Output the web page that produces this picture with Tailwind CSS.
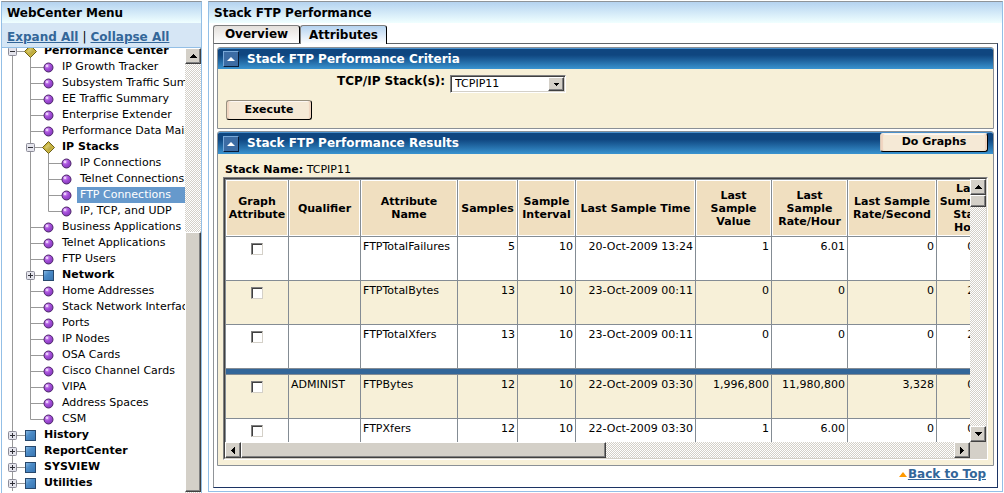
<!DOCTYPE html>
<html lang="en">
<head>
<meta charset="utf-8">
<title>Stack FTP Performance</title>
<script src="https://cdn.jsdelivr.net/npm/@tailwindcss/browser@4"></script>
</head>
<body class="flex h-screen gap-[6px] overflow-hidden bg-white pt-px pl-px pr-px font-['DejaVu_Sans',Verdana,sans-serif] text-[11px] leading-[13px] text-black">

<!-- Tree gutter symbols: connector lines plus node icon for each kind of row -->
<svg class="absolute h-0 w-0" aria-hidden="true">
  <defs>
    <radialGradient id="ballFill" cx="0.35" cy="0.3" r="0.75"><stop offset="0" stop-color="#e0b8f8"/><stop offset="0.45" stop-color="#a850dc"/><stop offset="1" stop-color="#8038b8"/></radialGradient>
    <linearGradient id="blueFill" x1="0" y1="0" x2="1" y2="1"><stop offset="0" stop-color="#8cbce4"/><stop offset="0.4" stop-color="#4c8cc8"/><stop offset="1" stop-color="#3874b0"/></linearGradient>
    <linearGradient id="goldFill" x1="0" y1="0" x2="1" y2="1"><stop offset="0" stop-color="#f0e490"/><stop offset="1" stop-color="#a08c20"/></linearGradient>
    <g id="ball"><circle cx="0.5" cy="0.5" r="4.5" fill="url(#ballFill)" stroke="#4c2468"/><circle cx="-1" cy="-1" r="1" fill="#f4dcff"/></g>
    <g id="square"><rect x="-4.5" y="-4.5" width="10" height="10" fill="url(#blueFill)" stroke="#28486c"/></g>
    <g id="diamond"><path d="M.5-5.5 6.5.5.5 6.5-5.5.5Z" fill="#c8b440" stroke="#6c601c"/><path d="M.5-3 4 .5.5 4-3 .5Z" fill="url(#goldFill)"/></g>
    <g id="box"><rect x="-3.5" y="-3.5" width="8" height="8" rx="1" fill="#e4e4ec" stroke="#8c8c98"/><path d="M-2 .5H3" stroke="#303038"/></g>
    <g id="plus"><use href="#box"/><path d="M.5-2V3" stroke="#303038"/></g>
  </defs>
  <symbol id="l1-open" viewBox="2 0 39 16"><path d="M12.5 8V16M12.5 8.5H30M30.5 8V16" stroke="#999" fill="none"/><use href="#box" x="12" y="8"/><use href="#diamond" x="30" y="8"/></symbol>
  <symbol id="l1-closed" viewBox="2 0 39 16"><path d="M12.5 0V16M12.5 8.5H30" stroke="#999" fill="none"/><use href="#plus" x="12" y="8"/><use href="#square" x="30" y="8"/></symbol>
  <symbol id="l2-leaf" viewBox="2 0 57 16"><path d="M12.5 0V16M30.5 0V16M30.5 8.5H48" stroke="#999" fill="none"/><use href="#ball" x="48" y="8"/></symbol>
  <symbol id="l2-last" viewBox="2 0 57 16"><path d="M12.5 0V16M30.5 0V8.5H48" stroke="#999" fill="none"/><use href="#ball" x="48" y="8"/></symbol>
  <symbol id="l2-open" viewBox="2 0 57 16"><path d="M12.5 0V16M30.5 0V16M30.5 8.5H48M48.5 8V16" stroke="#999" fill="none"/><use href="#box" x="30" y="8"/><use href="#diamond" x="48" y="8"/></symbol>
  <symbol id="l2-closed" viewBox="2 0 57 16"><path d="M12.5 0V16M30.5 0V16M30.5 8.5H48" stroke="#999" fill="none"/><use href="#plus" x="30" y="8"/><use href="#square" x="48" y="8"/></symbol>
  <symbol id="l3-leaf" viewBox="2 0 75 16"><path d="M12.5 0V16M30.5 0V16M48.5 0V16M48.5 8.5H66" stroke="#999" fill="none"/><use href="#ball" x="66" y="8"/></symbol>
  <symbol id="l3-last" viewBox="2 0 75 16"><path d="M12.5 0V16M30.5 0V16M48.5 0V8.5H66" stroke="#999" fill="none"/><use href="#ball" x="66" y="8"/></symbol>
</svg>

<nav class="flex w-[201px] shrink-0 flex-col border-x border-t border-x-[#93bfe6] border-t-[#8f9499]">
  <h2 class="flex h-[21px] shrink-0 items-center bg-linear-to-b from-[#b5d3f0] to-[#f0ffff] pt-[2px] pl-[5px] text-[12px] font-bold">WebCenter Menu</h2>
  <div class="flex h-[25px] shrink-0 items-center gap-[4px] border-b border-[#93bfe6] bg-[#d6e6f5] pt-[4px] pl-[5px] text-[12px]">
    <a href="#" class="font-bold text-[#336699] underline">Expand All</a><span>|</span><a href="#" class="font-bold text-[#336699] underline">Collapse All</a>
  </div>
  <div class="flex min-h-0 flex-1">
    <ul class="-mt-[5px] min-w-0 flex-1 overflow-hidden whitespace-nowrap leading-4 [clip-path:inset(5px_0_0_0)]">
      <li class="flex h-4"><svg class="h-4 w-[39px] shrink-0"><use href="#l1-open"/></svg><a href="#" class="px-[3px] font-bold">Performance Center</a></li>
      <li class="flex h-4"><svg class="h-4 w-[57px] shrink-0"><use href="#l2-leaf"/></svg><a href="#" class="px-[3px]">IP Growth Tracker</a></li>
      <li class="flex h-4"><svg class="h-4 w-[57px] shrink-0"><use href="#l2-leaf"/></svg><a href="#" class="px-[3px]">Subsystem Traffic Summary</a></li>
      <li class="flex h-4"><svg class="h-4 w-[57px] shrink-0"><use href="#l2-leaf"/></svg><a href="#" class="px-[3px]">EE Traffic Summary</a></li>
      <li class="flex h-4"><svg class="h-4 w-[57px] shrink-0"><use href="#l2-leaf"/></svg><a href="#" class="px-[3px]">Enterprise Extender</a></li>
      <li class="flex h-4"><svg class="h-4 w-[57px] shrink-0"><use href="#l2-leaf"/></svg><a href="#" class="px-[3px]">Performance Data Maintenance</a></li>
      <li class="flex h-4"><svg class="h-4 w-[57px] shrink-0"><use href="#l2-open"/></svg><a href="#" class="px-[3px] font-bold">IP Stacks</a></li>
      <li class="flex h-4"><svg class="h-4 w-[75px] shrink-0"><use href="#l3-leaf"/></svg><a href="#" class="px-[3px]">IP Connections</a></li>
      <li class="flex h-4"><svg class="h-4 w-[75px] shrink-0"><use href="#l3-leaf"/></svg><a href="#" class="px-[3px]">Telnet Connections</a></li>
      <li class="flex h-4"><svg class="h-4 w-[75px] shrink-0"><use href="#l3-leaf"/></svg><a href="#" class="flex-1 bg-[#6699cc] px-[3px] text-white">FTP Connections</a></li>
      <li class="flex h-4"><svg class="h-4 w-[75px] shrink-0"><use href="#l3-last"/></svg><a href="#" class="px-[3px]">IP, TCP, and UDP</a></li>
      <li class="flex h-4"><svg class="h-4 w-[57px] shrink-0"><use href="#l2-leaf"/></svg><a href="#" class="px-[3px]">Business Applications</a></li>
      <li class="flex h-4"><svg class="h-4 w-[57px] shrink-0"><use href="#l2-leaf"/></svg><a href="#" class="px-[3px]">Telnet Applications</a></li>
      <li class="flex h-4"><svg class="h-4 w-[57px] shrink-0"><use href="#l2-leaf"/></svg><a href="#" class="px-[3px]">FTP Users</a></li>
      <li class="flex h-4"><svg class="h-4 w-[57px] shrink-0"><use href="#l2-closed"/></svg><a href="#" class="px-[3px] font-bold">Network</a></li>
      <li class="flex h-4"><svg class="h-4 w-[57px] shrink-0"><use href="#l2-leaf"/></svg><a href="#" class="px-[3px]">Home Addresses</a></li>
      <li class="flex h-4"><svg class="h-4 w-[57px] shrink-0"><use href="#l2-leaf"/></svg><a href="#" class="px-[3px]">Stack Network Interfaces</a></li>
      <li class="flex h-4"><svg class="h-4 w-[57px] shrink-0"><use href="#l2-leaf"/></svg><a href="#" class="px-[3px]">Ports</a></li>
      <li class="flex h-4"><svg class="h-4 w-[57px] shrink-0"><use href="#l2-leaf"/></svg><a href="#" class="px-[3px]">IP Nodes</a></li>
      <li class="flex h-4"><svg class="h-4 w-[57px] shrink-0"><use href="#l2-leaf"/></svg><a href="#" class="px-[3px]">OSA Cards</a></li>
      <li class="flex h-4"><svg class="h-4 w-[57px] shrink-0"><use href="#l2-leaf"/></svg><a href="#" class="px-[3px]">Cisco Channel Cards</a></li>
      <li class="flex h-4"><svg class="h-4 w-[57px] shrink-0"><use href="#l2-leaf"/></svg><a href="#" class="px-[3px]">VIPA</a></li>
      <li class="flex h-4"><svg class="h-4 w-[57px] shrink-0"><use href="#l2-leaf"/></svg><a href="#" class="px-[3px]">Address Spaces</a></li>
      <li class="flex h-4"><svg class="h-4 w-[57px] shrink-0"><use href="#l2-last"/></svg><a href="#" class="px-[3px]">CSM</a></li>
      <li class="flex h-4"><svg class="h-4 w-[39px] shrink-0"><use href="#l1-closed"/></svg><a href="#" class="px-[3px] font-bold">History</a></li>
      <li class="flex h-4"><svg class="h-4 w-[39px] shrink-0"><use href="#l1-closed"/></svg><a href="#" class="px-[3px] font-bold">ReportCenter</a></li>
      <li class="flex h-4"><svg class="h-4 w-[39px] shrink-0"><use href="#l1-closed"/></svg><a href="#" class="px-[3px] font-bold">SYSVIEW</a></li>
      <li class="flex h-4"><svg class="h-4 w-[39px] shrink-0"><use href="#l1-closed"/></svg><a href="#" class="px-[3px] font-bold">Utilities</a></li>
    </ul>
    <div class="flex w-4 shrink-0 flex-col bg-[repeating-conic-gradient(#fff_0_25%,#d4d0c8_0_50%)] bg-[length:2px_2px]">
      <button aria-label="Scroll up" class="flex h-4 w-4 shrink-0 items-center justify-center border border-t-white border-r-[#404040] border-b-[#404040] border-l-white bg-[#d4d0c8] shadow-[inset_-1px_-1px_0_#808080]"><svg class="h-1 w-[7px]" viewBox="0 0 7 4" shape-rendering="crispEdges"><path d="M3 0h1v1h1v1h1v1h1v1H0V3h1V2h1V1h1z"/></svg></button>
      <div class="mt-[168px] h-[260px] border border-t-white border-r-[#404040] border-b-[#404040] border-l-white bg-[#d4d0c8] shadow-[inset_-1px_-1px_0_#808080]"></div>
    </div>
  </div>
</nav>

<main class="mb-px flex min-w-0 flex-1 flex-col border border-t-[#8f9499] border-r-[#93bfe6] border-b-[#93bfe6] border-l-[#93bfe6] pb-[3px]">
  <h1 class="flex h-[21px] shrink-0 items-center bg-linear-to-b from-[#b5d3f0] to-[#f0ffff] pt-[2px] pl-[5px] text-[12px] font-bold">Stack FTP Performance</h1>

  <div class="ml-1 flex h-[20px] shrink-0 items-end" role="tablist">
    <button role="tab" class="h-[18px] w-[87px] rounded-t-[3px] border border-b-0 border-t-[#808080] border-r-black border-l-[#808080] bg-linear-to-b from-[#e4e0dc] to-white text-[12px] font-bold">Overview</button>
    <button role="tab" aria-selected="true" class="relative z-10 -mb-px h-[19px] w-[87px] rounded-t-[3px] border border-b-0 border-t-[#808080] border-r-black border-l-[#808080] bg-linear-to-b from-[#b5d3f0] to-white text-[12px] font-bold">Attributes</button>
  </div>

  <div class="mr-1 ml-1 flex flex-1 flex-col gap-[2px] border border-t-[#606468] border-r-[#1c3464] border-b-[#1c3464] border-l-[#909498] px-[3px] pt-[3px]">
    <section class="shrink-0 rounded-t-[3px] border border-[#8a9096] bg-[#f7f0d8]">
      <div class="flex h-[21px] items-center gap-2 rounded-t-[2px] border-t border-[#4a90cc] bg-linear-to-b from-[#0f4680] from-30% to-[#3a94d0] pl-[5px]">
        <button aria-label="Collapse criteria" class="flex h-4 w-4 items-center justify-center border border-t-[#78a8d8] border-r-[#081c38] border-b-[#081c38] border-l-[#78a8d8] bg-[#3c6ca4]"><svg class="h-1 w-2" viewBox="0 0 8 4"><path d="M4 0 8 4H0Z" fill="#fff"/></svg></button>
        <h2 class="text-[12px] font-bold text-white">Stack FTP Performance Criteria</h2>
      </div>
      <form class="h-[59px] pl-2">
        <div class="flex justify-start pt-[6px] pl-[111px]">
          <label for="stack" class="w-[113px] text-[12px] font-bold whitespace-nowrap">TCP/IP Stack(s):</label>
          <div class="relative h-[18px] w-[116px]">
            <select id="stack" class="block h-full w-full appearance-none rounded-none border border-t-[#808080] border-r-white border-b-white border-l-[#808080] bg-white pl-1 text-[11px] leading-[14px] shadow-[inset_1px_1px_0_#404040,inset_-1px_-1px_0_#d4d0c8]"><option>TCPIP11</option></select>
            <span class="pointer-events-none absolute top-[2px] right-[2px] flex h-[14px] w-4 items-center justify-center border border-t-white border-r-[#404040] border-b-[#404040] border-l-white bg-[#d4d0c8] shadow-[inset_-1px_-1px_0_#808080]"><svg class="h-[3px] w-[5px]" viewBox="0 0 5 3" shape-rendering="crispEdges"><path d="M0 0h5v1H4v1H3v1H2V2H1V1H0z"/></svg></span>
          </div>
        </div>
        <button type="button" class="mt-[7px] block h-5 w-[86px] rounded-[3px] border border-t-[#989080] border-r-black border-b-black border-l-[#989080] bg-[#f5e9d6] pb-[2px] font-bold shadow-[inset_2px_0_1px_#f0d4c0,inset_-2px_0_1px_#f0d4c0,inset_0_1px_0_#fff]">Execute</button>
      </form>
    </section>

    <section class="shrink-0 rounded-t-[3px] border border-[#8a9096] bg-[#f7f0d8]">
      <div class="flex h-[22px] items-center gap-2 rounded-t-[2px] border-t border-[#4a90cc] bg-linear-to-b from-[#0f4680] from-30% to-[#3a94d0] pr-[5px] pl-[5px]">
        <button aria-label="Collapse results" class="flex h-4 w-4 items-center justify-center border border-t-[#78a8d8] border-r-[#081c38] border-b-[#081c38] border-l-[#78a8d8] bg-[#3c6ca4]"><svg class="h-1 w-2" viewBox="0 0 8 4"><path d="M4 0 8 4H0Z" fill="#fff"/></svg></button>
        <h2 class="text-[12px] font-bold text-white">Stack FTP Performance Results</h2>
        <button class="ml-auto h-[19px] w-[108px] self-start rounded-[3px] border border-t-[#f8f0e4] border-r-black border-b-black border-l-[#d8c8b8] bg-[#f5e9d6] pb-[2px] font-bold shadow-[inset_2px_0_1px_#f0d4c0,inset_-2px_0_1px_#f0d4c0,inset_0_1px_0_#fff]">Do Graphs</button>
      </div>
      <p class="pt-[9px] pb-[1px] pl-[7px]"><b>Stack Name:</b> TCPIP11</p>

      <div class="mr-[5px] mb-[5px] ml-[5px] border border-t-[#808080] border-r-white border-b-white border-l-[#808080]">
        <div class="border border-t-[#404040] border-r-[#d4d0c8] border-b-[#d4d0c8] border-l-[#404040]">
          <div class="flex h-[263px]">
            <div class="min-w-0 flex-1 overflow-hidden">
              <table class="w-[777px] table-fixed border-separate border-spacing-0 border-t border-l border-[#848c94] bg-white [&_td]:border-r [&_td]:border-b [&_td]:border-[#848c94] [&_td]:px-[2px] [&_td]:pt-[3px] [&_td]:align-top [&_th]:border-r [&_th]:border-b [&_th]:border-[#848c94] [&_th]:bg-[#f0dfc0] [&_th]:shadow-[inset_0_0_0_1px_#fff]">
                <colgroup><col class="w-[63px]"><col class="w-[72px]"><col class="w-[97px]"><col class="w-[60px]"><col class="w-[58px]"><col class="w-[120px]"><col class="w-[76px]"><col class="w-[76px]"><col class="w-[89px]"><col class="w-[65px]"></colgroup>
                <thead>
                  <tr class="h-[57px]"><th>Graph<br>Attribute</th><th>Qualifier</th><th>Attribute<br>Name</th><th>Samples</th><th>Sample<br>Interval</th><th class="whitespace-nowrap">Last Sample Time</th><th>Last<br>Sample<br>Value</th><th>Last<br>Sample<br>Rate/Hour</th><th class="whitespace-nowrap">Last Sample<br>Rate/Second</th><th>Last<br>Summary<br>Start<br>Hour</th></tr>
                </thead>
                <tbody class="text-right">
                  <tr class="h-[44px]"><td class="text-center"><input type="checkbox" aria-label="Graph FTPTotalFailures" class="mt-[3px] h-3 w-3 appearance-none border border-t-[#808080] border-r-[#d4d0c8] border-b-[#d4d0c8] border-l-[#808080] bg-white shadow-[inset_1px_1px_0_#404040]"></td><td></td><td class="text-left">FTPTotalFailures</td><td>5</td><td>10</td><td>20-Oct-2009 13:24</td><td>1</td><td>6.01</td><td>0</td><td>01:00</td></tr>
                  <tr class="h-[44px] bg-[#f7f0d8]"><td class="text-center"><input type="checkbox" aria-label="Graph FTPTotalBytes" class="mt-[3px] h-3 w-3 appearance-none border border-t-[#808080] border-r-[#d4d0c8] border-b-[#d4d0c8] border-l-[#808080] bg-white shadow-[inset_1px_1px_0_#404040]"></td><td></td><td class="text-left">FTPTotalBytes</td><td>13</td><td>10</td><td>23-Oct-2009 00:11</td><td>0</td><td>0</td><td>0</td><td>23:00</td></tr>
                  <tr class="h-[44px]"><td class="text-center"><input type="checkbox" aria-label="Graph FTPTotalXfers" class="mt-[3px] h-3 w-3 appearance-none border border-t-[#808080] border-r-[#d4d0c8] border-b-[#d4d0c8] border-l-[#808080] bg-white shadow-[inset_1px_1px_0_#404040]"></td><td></td><td class="text-left">FTPTotalXfers</td><td>13</td><td>10</td><td>23-Oct-2009 00:11</td><td>0</td><td>0</td><td>0</td><td>23:00</td></tr>
                  <tr class="h-[6px] bg-[#336699] text-[0px] leading-[0]"><td colspan="10" class="h-[6px] pt-0!"></td></tr>
                  <tr class="h-[44px] bg-[#f7f0d8]"><td class="text-center"><input type="checkbox" aria-label="Graph ADMINIST FTPBytes" class="mt-[3px] h-3 w-3 appearance-none border border-t-[#808080] border-r-[#d4d0c8] border-b-[#d4d0c8] border-l-[#808080] bg-white shadow-[inset_1px_1px_0_#404040]"></td><td class="text-left">ADMINIST</td><td class="text-left">FTPBytes</td><td>12</td><td>10</td><td>22-Oct-2009 03:30</td><td>1,996,800</td><td>11,980,800</td><td>3,328</td><td>03:00</td></tr>
                  <tr class="h-[44px]"><td class="text-center"><input type="checkbox" aria-label="Graph ADMINIST FTPXfers" class="mt-[3px] h-3 w-3 appearance-none border border-t-[#808080] border-r-[#d4d0c8] border-b-[#d4d0c8] border-l-[#808080] bg-white shadow-[inset_1px_1px_0_#404040]"></td><td></td><td class="text-left">FTPXfers</td><td>12</td><td>10</td><td>22-Oct-2009 03:30</td><td>1</td><td>6.00</td><td>0</td><td>03:00</td></tr>
                </tbody>
              </table>
            </div>
            <div class="flex w-4 shrink-0 flex-col bg-[repeating-conic-gradient(#fff_0_25%,#d4d0c8_0_50%)] bg-[length:2px_2px]">
              <button aria-label="Scroll up" class="flex h-4 w-4 shrink-0 items-center justify-center border border-t-white border-r-[#404040] border-b-[#404040] border-l-white bg-[#d4d0c8] shadow-[inset_-1px_-1px_0_#808080]"><svg class="h-1 w-[7px]" viewBox="0 0 7 4" shape-rendering="crispEdges"><path d="M3 0h1v1h1v1h1v1h1v1H0V3h1V2h1V1h1z"/></svg></button>
              <div class="h-3 border border-t-white border-r-[#404040] border-b-[#404040] border-l-white bg-[#d4d0c8] shadow-[inset_-1px_-1px_0_#808080]"></div>
              <button aria-label="Scroll down" class="mt-auto flex h-4 w-4 shrink-0 items-center justify-center border border-t-white border-r-[#404040] border-b-[#404040] border-l-white bg-[#d4d0c8] shadow-[inset_-1px_-1px_0_#808080]"><svg class="h-1 w-[7px]" viewBox="0 0 7 4" shape-rendering="crispEdges"><path d="M0 0h7v1H6v1H5v1H4v1H3V3H2V2H1V1H0z"/></svg></button>
            </div>
          </div>
          <div class="flex h-4">
            <div class="flex min-w-0 flex-1 bg-[repeating-conic-gradient(#fff_0_25%,#d4d0c8_0_50%)] bg-[length:2px_2px]">
              <button aria-label="Scroll left" class="flex h-4 w-4 shrink-0 items-center justify-center border border-t-white border-r-[#404040] border-b-[#404040] border-l-white bg-[#d4d0c8] shadow-[inset_-1px_-1px_0_#808080]"><svg class="h-[7px] w-1" viewBox="0 0 4 7" shape-rendering="crispEdges"><path d="M4 0v7H3V6H2V5H1V4H0V3h1V2h1V1h1V0z"/></svg></button>
              <div class="w-[49%] border border-t-white border-r-[#404040] border-b-[#404040] border-l-white bg-[#d4d0c8] shadow-[inset_-1px_-1px_0_#808080]"></div>
              <button aria-label="Scroll right" class="ml-auto flex h-4 w-4 shrink-0 items-center justify-center border border-t-white border-r-[#404040] border-b-[#404040] border-l-white bg-[#d4d0c8] shadow-[inset_-1px_-1px_0_#808080]"><svg class="h-[7px] w-1" viewBox="0 0 4 7" shape-rendering="crispEdges"><path d="M0 0h1v1h1v1h1v1h1v1H3v1H2v1H1v1H0z"/></svg></button>
            </div>
            <div class="w-4 shrink-0 bg-[#d4d0c8]"></div>
          </div>
        </div>
      </div>
    </section>

    <div class="flex items-center justify-end gap-px pr-2 text-[12px]">
      <svg class="h-[5px] w-2" viewBox="0 0 8 5"><path d="M4 0 8 5H0Z" fill="#ff9900"/></svg>
      <a href="#" class="font-bold text-[#336699] underline">Back to Top</a>
    </div>
  </div>
</main>
</body>
</html>
